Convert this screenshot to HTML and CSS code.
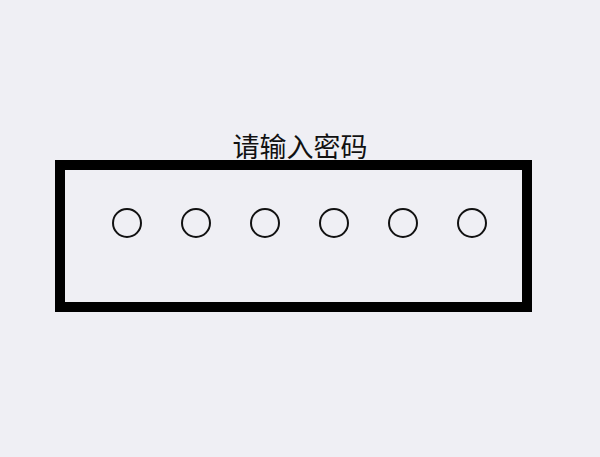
FILE: index.html
```html
<!DOCTYPE html>
<html lang="zh-CN">
<head>
<meta charset="utf-8">
<title>请输入密码</title>
<link rel="stylesheet" href="styles.css">
</head>
<body>
<main class="screen">
  <h1 class="title">请输入密码</h1>
  <div class="pin-box">
    <span class="dot"></span>
    <span class="dot"></span>
    <span class="dot"></span>
    <span class="dot"></span>
    <span class="dot"></span>
    <span class="dot"></span>
  </div>
</main>
</body>
</html>
```
FILE: styles.css
```css
html, body {
  margin: 0;
  padding: 0;
  background: #efeff4;
}

.screen {
  width: 600px;
  height: 457px;
  box-sizing: border-box;
  padding-top: 131px;
  font-family: "Noto Sans CJK SC", "Noto Sans", sans-serif;
  color: #111;
}

.title {
  margin: 0;
  font-size: 27px;
  font-weight: 400;
  line-height: 29px;
  text-align: center;
}

.pin-box {
  box-sizing: border-box;
  width: 477px;
  height: 152px;
  margin-left: 55px;
  border: 10px solid #000;
  display: flex;
  align-items: flex-start;
  gap: 39px;
  padding-left: 47px;
  padding-top: 38px;
}

.dot {
  flex: none;
  box-sizing: border-box;
  width: 30px;
  height: 30px;
  border: 2px solid #111;
  border-radius: 50%;
}
```
